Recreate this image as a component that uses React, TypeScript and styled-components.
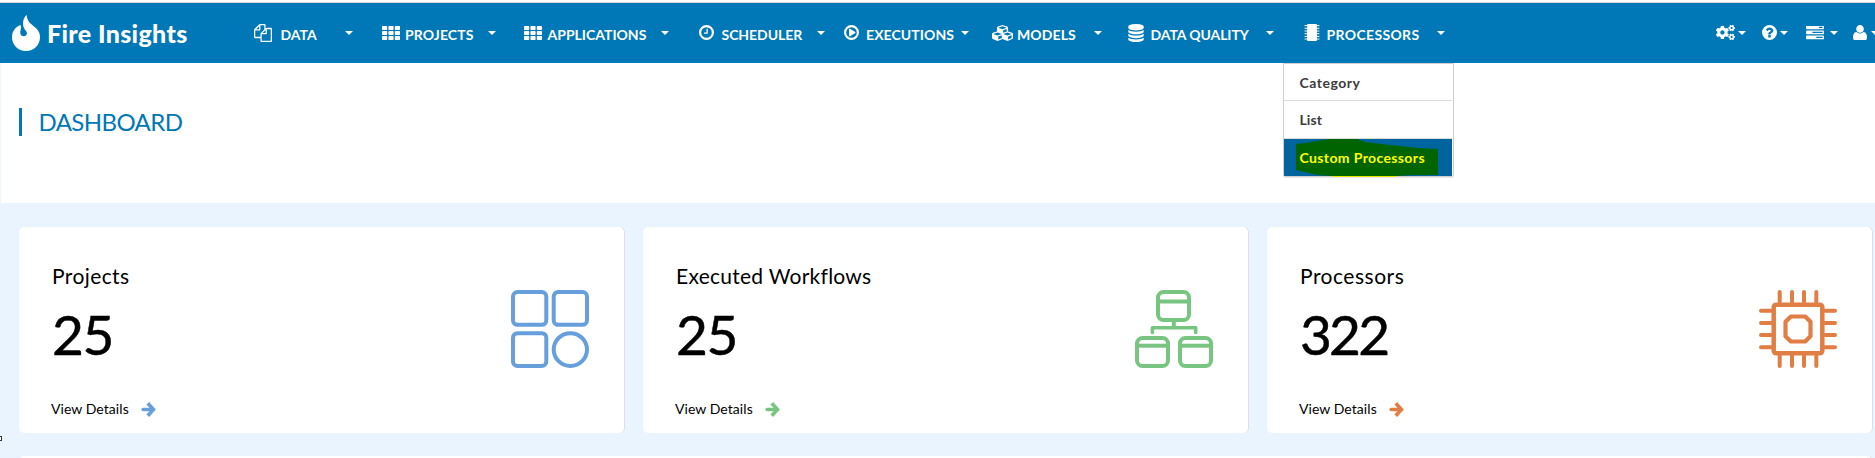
import React from 'react';
import styled, { createGlobalStyle } from 'styled-components';
import { FaCogs, FaCubes } from 'react-icons/fa';

const GlobalStyle = createGlobalStyle`
  * { box-sizing: border-box; }
  html, body { margin: 0; overflow: hidden; background: #e9f4ff; }
  body { font-family: Lato, sans-serif; color: #000; }
  svg { display: block; flex: none; }
`;

const Page = styled.div`
  height: 458px;
  overflow: hidden;
  position: relative;
`;
const Header = styled.header`
  height: 63px;
  display: flex;
  align-items: center;
  background: #0077b7;
  border-top: 2px solid #fdfdfd;
  box-shadow: inset 0 1px 0 #d3d7da;
  color: #fff;
  padding-left: 12px;
`;
const Brand = styled.div`
  width: 242.5px;
  display: flex;
  align-items: center;
  gap: 7px;
`;
const BrandName = styled.span`
  font-size: 25px;
  line-height: 30px;
  font-weight: 900;
  letter-spacing: 0.36px;
`;
const Nav = styled.nav`
  display: flex;
  align-items: center;
`;
const NavItem = styled.div<{ $w: number }>`
  width: ${(p) => p.$w}px;
  height: 60px;
  display: flex;
  align-items: center;
  position: relative;
`;
const IconSlot = styled.span<{ $w: number }>`
  width: ${(p) => p.$w}px;
  flex: none;
`;
const NavLabel = styled.span<{ $w: number; $ls: number }>`
  width: ${(p) => p.$w}px;
  flex: none;
  white-space: nowrap;
  font-size: 14px;
  line-height: 18px;
  font-weight: 700;
  letter-spacing: ${(p) => p.$ls}px;
  padding: 4px 0 0 1px;
`;
const Caret = styled.i`
  border: 4.5px solid transparent;
  border-top: 4px solid #fff;
  border-bottom: 0;
`;
const Tools = styled.div`
  display: flex;
  align-items: center;
  flex: none;
`;
const Tool = styled.div<{ $w: number; $gap: number }>`
  width: ${(p) => p.$w}px;
  flex: none;
  display: flex;
  align-items: center;
  gap: ${(p) => p.$gap}px;
`;

const Menu = styled.div`
  position: absolute;
  left: -21px;
  top: 60px;
  width: 171px;
  height: 114px;
  background: #fff;
  border: 1px solid #cfcfcf;
  border-radius: 0 0 3px 3px;
  box-shadow: 0 1px 1px rgba(0, 0, 0, 0.1);
  z-index: 2;
`;
const MenuItem = styled.div<{ $h: number; $ls: number; $active?: boolean }>`
  height: ${(p) => p.$h}px;
  margin-right: 1px;
  padding: 1px 0 0 16px;
  display: flex;
  align-items: center;
  position: relative;
  font-size: 14px;
  font-weight: 700;
  white-space: nowrap;
  letter-spacing: ${(p) => p.$ls}px;
  color: ${(p) => (p.$active ? '#ffff00' : '#3c3c3c')};
  background: ${(p) => (p.$active ? '#00659f' : '#fff')};
  border-bottom: ${(p) => (p.$active ? 'none' : '1px solid #dcdcdc')};
  span { position: relative; }
`;
const Marker = styled.svg`
  position: absolute;
  left: 12px;
  top: 0;
`;

const TitlePanel = styled.section`
  height: 140px;
  margin-left: 1px;
  padding: 45px 0 0 18px;
  background: #fff;
`;
const Title = styled.h1`
  margin: 0;
  height: 28px;
  border-left: 3px solid #0077b7;
  padding-left: 16.5px;
  color: #0077b7;
  font-size: 24px;
  line-height: 28px;
  font-weight: 400;
  letter-spacing: -0.6px;
`;
const Cards = styled.main`
  display: grid;
  grid-template-columns: repeat(3, 606px);
  column-gap: 18px;
  row-gap: 23px;
  padding: 24px 0 0 19px;
`;
const Card = styled.article`
  height: 206px;
  background: #fff;
  border-radius: 5px;
  box-shadow: inset -1px 0 0 #dcdfe3;
  padding: 35px 36px 0 32px;
  display: flex;
  justify-content: space-between;
`;
const WideCard = styled(Card)`
  grid-column: 1 / -1;
`;
const CardBody = styled.div`
  display: flex;
  flex-direction: column;
`;
const CardTitle = styled.h2<{ $ls: number }>`
  margin: 1px 0 0 1px;
  font-size: 21px;
  line-height: 26px;
  font-weight: 400;
  letter-spacing: ${(p) => p.$ls}px;
`;
const Count = styled.div<{ $ls: number }>`
  margin: 11px 0 0 1px;
  font-size: 55px;
  line-height: 68px;
  font-weight: 400;
  letter-spacing: ${(p) => p.$ls}px;
  -webkit-text-stroke: 0.5px #000;
`;
const Details = styled.a`
  margin-top: 32px;
  display: flex;
  align-items: center;
  gap: 12px;
  font-size: 14px;
  line-height: 18px;
  letter-spacing: 0.06px;
`;
const Art = styled.div`
  padding-top: 28px;
`;
const EdgeMark = styled.i`
  position: absolute;
  left: -2px;
  top: 436px;
  width: 4px;
  height: 5px;
  border: 1px solid #333;
  background: #fff;
`;

const full = '0 0 1792 1792';
const ring = 'M896 128a768 768 0 1 0 0 1536a768 768 0 1 0 0-1536z';

const Flame = () => (
  <svg width="28" height="36" viewBox="12 15 28 36" fill="#fff">
    <path d="M26.7 15C22.5 18 22.5 25 24 28C25 30.5 27.5 31.5 26.8 34C26 37.2 20.6 37 20.3 33C20.1 30 21.8 28 20.4 25C15 27 12 32 12 37C12 45 18 51 26 51S40 45 40 37C40 32 37.5 29.3 34 26.5C30 23 27 21 26.7 15Z" />
  </svg>
);
const Files = () => (
  <svg width="18" height="18" viewBox={full} fill="#fff">
    <path d="M1696 384q40 0 68 28t28 68v1216q0 40-28 68t-68 28h-960q-40 0-68-28t-28-68v-288h-544q-40 0-68-28t-28-68v-672q0-40 20-88t48-76l408-408q28-28 76-48t88-20h416q40 0 68 28t28 68v328q68-40 128-40h416zm-544 213l-299 299h299v-299zm-640-384l-299 299h299v-299zm196 647l316-316v-416h-384v416q0 40-28 68t-68 28h-416v640h512v-256q0-40 20-88t48-76zm956 804v-1152h-384v416q0 40-28 68t-68 28h-416v640h896z" />
  </svg>
);
const Grid = () => (
  <svg width="18" height="14" viewBox="0 0 18 14" fill="#fff">
    {[0, 5, 10].map((y) => [0, 6.4, 12.8].map((x) => <rect key={`${x}-${y}`} x={x} y={y} width="5.2" height="4" rx=".8" />))}
  </svg>
);
const Clock = () => (
  <svg width="15" height="15" viewBox="128 128 1536 1536">
    <circle cx="896" cy="896" r="656" fill="none" stroke="#fff" strokeWidth="224" />
    <path fill="#fff" d="M1024 544v448q0 14-9 23t-23 9h-320q-14 0-23-9t-9-23v-64q0-14 9-23t23-9h224v-352q0-14 9-23t23-9h64q14 0 23 9t9 23z" />
  </svg>
);
const Play = () => (
  <svg width="15" height="15" viewBox="128 128 1536 1536">
    <circle cx="896" cy="896" r="656" fill="none" stroke="#fff" strokeWidth="224" />
    <path fill="#fff" d="M1312 896q0 37-32 55l-544 320q-15 9-32 9-16 0-32-8-32-19-32-56v-640q0-37 32-56 33-18 64 1l544 320q32 18 32 55z" />
  </svg>
);
const Database = () => (
  <svg width="16" height="18" viewBox="128 0 1536 1792" fill="#fff">
    <path d="M896 768q237 0 443-43t325-127v170q0 69-103 128t-280 93.500-385 34.500-385-34.500-280-93.500-103-128v-170q119 84 325 127t443 43zm0 768q237 0 443-43t325-127v170q0 69-103 128t-280 93.500-385 34.500-385-34.500-280-93.500-103-128v-170q119 84 325 127t443 43zm0-384q237 0 443-43t325-127v170q0 69-103 128t-280 93.500-385 34.500-385-34.500-280-93.500-103-128v-170q119 84 325 127t443 43zm0-1152q208 0 385 34.500t280 93.500 103 128v128q0 69-103 128t-280 93.500-385 34.500-385-34.500-280-93.500-103-128v-128q0-69 103-128t280-93.500 385-34.500z" />
  </svg>
);
const Chip = () => (
  <svg width="16" height="17" viewBox="0 0 16 17" fill="#fff">
    <rect x="3" y="0" width="10" height="17" rx="1" />
    {[1.6, 4.3, 7, 9.7, 12.4, 15].map((y) => (
      <path key={y} d={`M.6 ${y}H15.4`} stroke="#fff" strokeWidth="1" />
    ))}
  </svg>
);
const Question = () => (
  <svg width="15" height="15" viewBox="128 128 1536 1536" fill="#fff" fillRule="evenodd">
    <path d={`${ring}M1024 1376v-192q0-14-9-23t-23-9h-192q-14 0-23 9t-9 23v192q0 14 9 23t23 9h192q14 0 23-9t9-23zm256-672q0-88-55.500-163t-138.500-116-170-41q-243 0-371 213-15 24 8 42l132 100q7 6 19 6 16 0 25-12 53-68 86-92 34-24 86-24 48 0 85.500 26t37.500 59q0 38-20 61t-68 45q-63 28-115.500 86.500t-52.500 125.500v36q0 14 9 23t23 9h192q14 0 23-9t9-23q0-19 21.500-49.500t54.500-49.500q32-18 49-28.500t46-35 44.500-48 28-60.500 12.500-81z`} />
  </svg>
);
const Tasks = () => (
  <svg width="18" height="14" viewBox="0 192 1792 1408" fill="#fff">
    <path d="M1024 1408h640v-128h-640v128zm-384-512h1024v-128h-1024v128zm640-512h384v-128h-384v128zm512 832v256q0 26-19 45t-45 19h-1664q-26 0-45-19t-19-45v-256q0-26 19-45t45-19h1664q26 0 45 19t19 45zm0-512v256q0 26-19 45t-45 19h-1664q-26 0-45-19t-19-45v-256q0-26 19-45t45-19h1664q26 0 45 19t19 45zm0-512v256q0 26-19 45t-45 19h-1664q-26 0-45-19t-19-45v-256q0-26 19-45t45-19h1664q26 0 45 19t19 45z" />
  </svg>
);
const User = () => (
  <svg width="14" height="15.5" viewBox="192 128 1408 1536" fill="#fff">
    <path d="M1600 1405q0 120-73 189.500t-194 69.500h-874q-121 0-194-69.500t-73-189.500q0-53 3.500-103.500t14-109 26.500-108.500 43-97.500 62-81 85.500-53.500 111.500-20q9 0 42 21.500t74.500 48 108 48 133.500 21.500 133.500-21.500 108-48 74.500-48 42-21.500q61 0 111.500 20t85.500 53.500 62 81 43 97.500 26.500 108.500 14 109 3.500 103.500zm-320-893q0 159-112.500 271.500t-271.500 112.500-271.500-112.500-112.500-271.500 112.500-271.500 271.500-112.500 271.500 112.500 112.500 271.500z" />
  </svg>
);
const Arrow = ({ color }: { color: string }) => (
  <svg width="15" height="16" viewBox="0 0 15 16" fill="none" stroke={color} strokeWidth="3.6">
    <path d="M2.2 8.5H12" strokeLinecap="round" />
    <path d="M6.8 2.2L12.4 8.5L6.8 14.8" />
  </svg>
);

const ProjectsArt = () => (
  <svg width="78" height="78" viewBox="0 0 78 78" fill="none" stroke="#679fdc" strokeWidth="4">
    <rect x="2" y="2" width="33.3" height="32.8" rx="4.5" />
    <rect x="42.7" y="2" width="33.3" height="32.8" rx="4.5" />
    <rect x="2" y="43.2" width="33.3" height="32.8" rx="4.5" />
    <ellipse cx="59.35" cy="59.6" rx="16.65" ry="16.4" />
  </svg>
);
const WorkflowArt = () => (
  <svg width="78" height="78" viewBox="0 0 78 78" fill="none" stroke="#77c580" strokeWidth="4">
    {[[21, 0], [0, 46], [43, 46]].map(([x, y]) => (
      <g key={`${x}-${y}`}>
        <rect x={x + 2} y={y + 2} width="31" height="28" rx="5.5" />
        <path d={`M${x + 3} ${y + (y ? 9.7 : 11.5)}h29`} />
      </g>
    ))}
    <path d="M38.8 31V37.5" />
    <path d="M17.4 42.5V37.7H60.7V42.5" strokeLinecap="round" strokeLinejoin="round" strokeWidth="3.6" />
  </svg>
);
const ProcessorArt = () => (
  <svg width="78" height="78" viewBox="0 0 78 78" fill="none" stroke="#e17e43" strokeWidth="4" strokeLinecap="round">
    <rect x="14.7" y="14.7" width="48.6" height="48.6" rx="2.5" strokeWidth="4.5" />
    <path d="M31.8 26.5H46.2L51.5 31.8V46.2L46.2 51.5H31.8L26.5 46.2V31.8Z" strokeWidth="4.2" strokeLinejoin="round" />
    {[20.7, 33, 45, 57.3].map((p) => (
      <path key={p} d={`M${p} 2V12M${p} 66V76M2 ${p}H12M66 ${p}H76`} />
    ))}
  </svg>
);

interface NavEntry {
  label: string;
  icon: React.ReactNode;
  width: number;
  iconWidth: number;
  labelWidth: number;
  spacing: number;
}
const nav: NavEntry[] = [
  { label: 'DATA', icon: <Files />, width: 128, iconWidth: 26, labelWidth: 65, spacing: 0 },
  { label: 'PROJECTS', icon: <Grid />, width: 142.5, iconWidth: 22.5, labelWidth: 83.5, spacing: 0.12 },
  { label: 'APPLICATIONS', icon: <Grid />, width: 174.5, iconWidth: 22.5, labelWidth: 114, spacing: 0 },
  { label: 'SCHEDULER', icon: <Clock />, width: 145, iconWidth: 22, labelWidth: 96, spacing: -0.05 },
  { label: 'EXECUTIONS', icon: <Play />, width: 148, iconWidth: 21.5, labelWidth: 95.5, spacing: 0.08 },
  { label: 'MODELS', icon: <FaCubes preserveAspectRatio="none" style={{ width: 21, height: 18 }} />, width: 136, iconWidth: 24.5, labelWidth: 77.5, spacing: 0.1 },
  { label: 'DATA QUALITY', icon: <Database />, width: 176, iconWidth: 22, labelWidth: 116, spacing: -0.08 },
  { label: 'PROCESSORS', icon: <Chip />, width: 412, iconWidth: 22, labelWidth: 111, spacing: 0.35 },
];

const cards = [
  { title: 'Projects', ls: 0.4, count: '25', countLs: -1.3, color: '#679fdc', art: <ProjectsArt /> },
  { title: 'Executed Workflows', ls: 0.26, count: '25', countLs: -1.3, color: '#77c580', art: <WorkflowArt /> },
  { title: 'Processors', ls: 0.5, count: '322', countLs: -2.8, color: '#e17e43', art: <ProcessorArt /> },
];

export default function App() {
  return (
    <Page>
      <GlobalStyle />
      <Header>
        <Brand>
          <Flame />
          <BrandName>Fire Insights</BrandName>
        </Brand>
        <Nav>
          {nav.map((n) => (
            <NavItem key={n.label} $w={n.width}>
              <IconSlot $w={n.iconWidth}>{n.icon}</IconSlot>
              <NavLabel $w={n.labelWidth} $ls={n.spacing}>{n.label}</NavLabel>
              <Caret />
              {n.label === 'PROCESSORS' && (
                <Menu>
                  <MenuItem $h={37} $ls={0.5}><span>Category</span></MenuItem>
                  <MenuItem $h={38} $ls={0.1}><span>List</span></MenuItem>
                  <MenuItem $h={37} $ls={0.38} $active>
                    <Marker width="143" height="38" viewBox="0 0 143 38">
                      <path fill="#006500" d="M0 5L9 4L20 2L34 0H61L69 3L94 6L122 9L142 10V36L116 36L100 37H36L22 36L0 31Z" />
                      <path fill="#e6e600" d="M36 37H100V38H36Z" />
                    </Marker>
                    <span>Custom Processors</span>
                  </MenuItem>
                </Menu>
              )}
            </NavItem>
          ))}
        </Nav>
        <Tools>
          <Tool $w={46} $gap={3}><FaCogs style={{ width: 19, height: 17 }} /><Caret /></Tool>
          <Tool $w={44.5} $gap={3}><Question /><Caret /></Tool>
          <Tool $w={47} $gap={6}><Tasks /><Caret /></Tool>
          <Tool $w={22} $gap={4}><User /><Caret /></Tool>
        </Tools>
      </Header>
      <TitlePanel>
        <Title>DASHBOARD</Title>
      </TitlePanel>
      <Cards>
        {cards.map((c) => (
          <Card key={c.title}>
            <CardBody>
              <CardTitle $ls={c.ls}>{c.title}</CardTitle>
              <Count $ls={c.countLs}>{c.count}</Count>
              <Details>View Details<Arrow color={c.color} /></Details>
            </CardBody>
            <Art>{c.art}</Art>
          </Card>
        ))}
        <WideCard />
      </Cards>
      <EdgeMark />
    </Page>
  );
}
